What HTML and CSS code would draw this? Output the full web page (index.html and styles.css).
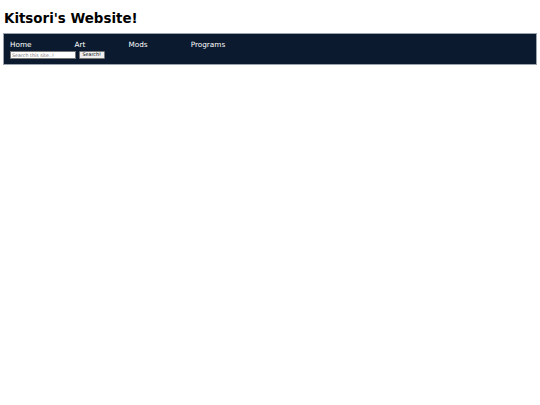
FILE: index.html
```html
<!DOCTYPE html>
<html>
<head>
<meta charset="utf-8">
<title>Kitsori's Website!</title>
<link rel="stylesheet" href="styles.css">
</head>
<body>
<h1 class="title">Kitsori's Website!</h1>
<nav class="nav">
  <div class="links">
    <a href="#" class="link">Home</a>
    <a href="#" class="link">Art</a>
    <a href="#" class="link">Mods</a>
    <a href="#" class="link">Programs</a>
  </div>
  <form class="search" onsubmit="return false">
    <input class="search-input" type="text" placeholder="Search this site..!">
    <button class="search-btn" type="submit">Search!</button>
  </form>
</nav>
</body>
</html>
```
FILE: styles.css
```css
html, body {
  background: #ffffff;
}
body {
  margin: 0;
  padding: 0 3px;
  font-family: "DejaVu Sans", Verdana, sans-serif;
}
.title {
  font-family: "DejaVu Sans", Verdana, sans-serif;
  font-weight: bold;
  font-size: 13.4px;
  line-height: normal;
  color: #000;
  margin: 11px 0 7px 1px;
}
.nav {
  background: #0b1a2f;
  border: 1px solid #9aa3ae;
  padding: 7px 6px 5px 6px;
}
.links {
  display: flex;
  gap: 43px;
  font-size: 7.3px;
  line-height: 8px;
}
.link {
  color: #ffffff;
  text-decoration: none;
}
.search {
  display: flex;
  align-items: center;
  gap: 3px;
  margin-top: 2px;
}
.search-input {
  box-sizing: border-box;
  width: 66px;
  height: 7.5px;
  margin: 0;
  padding: 0 1px;
  border: 0.5px solid #767676;
  background: #fff;
  font-family: "DejaVu Sans", sans-serif;
  font-size: 4.8px;
  outline: none;
}
.search-input::placeholder {
  color: #777;
}
.search-btn {
  box-sizing: border-box;
  width: 25.5px;
  height: 8px;
  margin: 0;
  padding: 0;
  border: 0.5px solid #767676;
  border-radius: 1px;
  background: #efefef;
  color: #000;
  font-family: "DejaVu Sans", sans-serif;
  font-size: 4.8px;
  line-height: 1;
}
```
